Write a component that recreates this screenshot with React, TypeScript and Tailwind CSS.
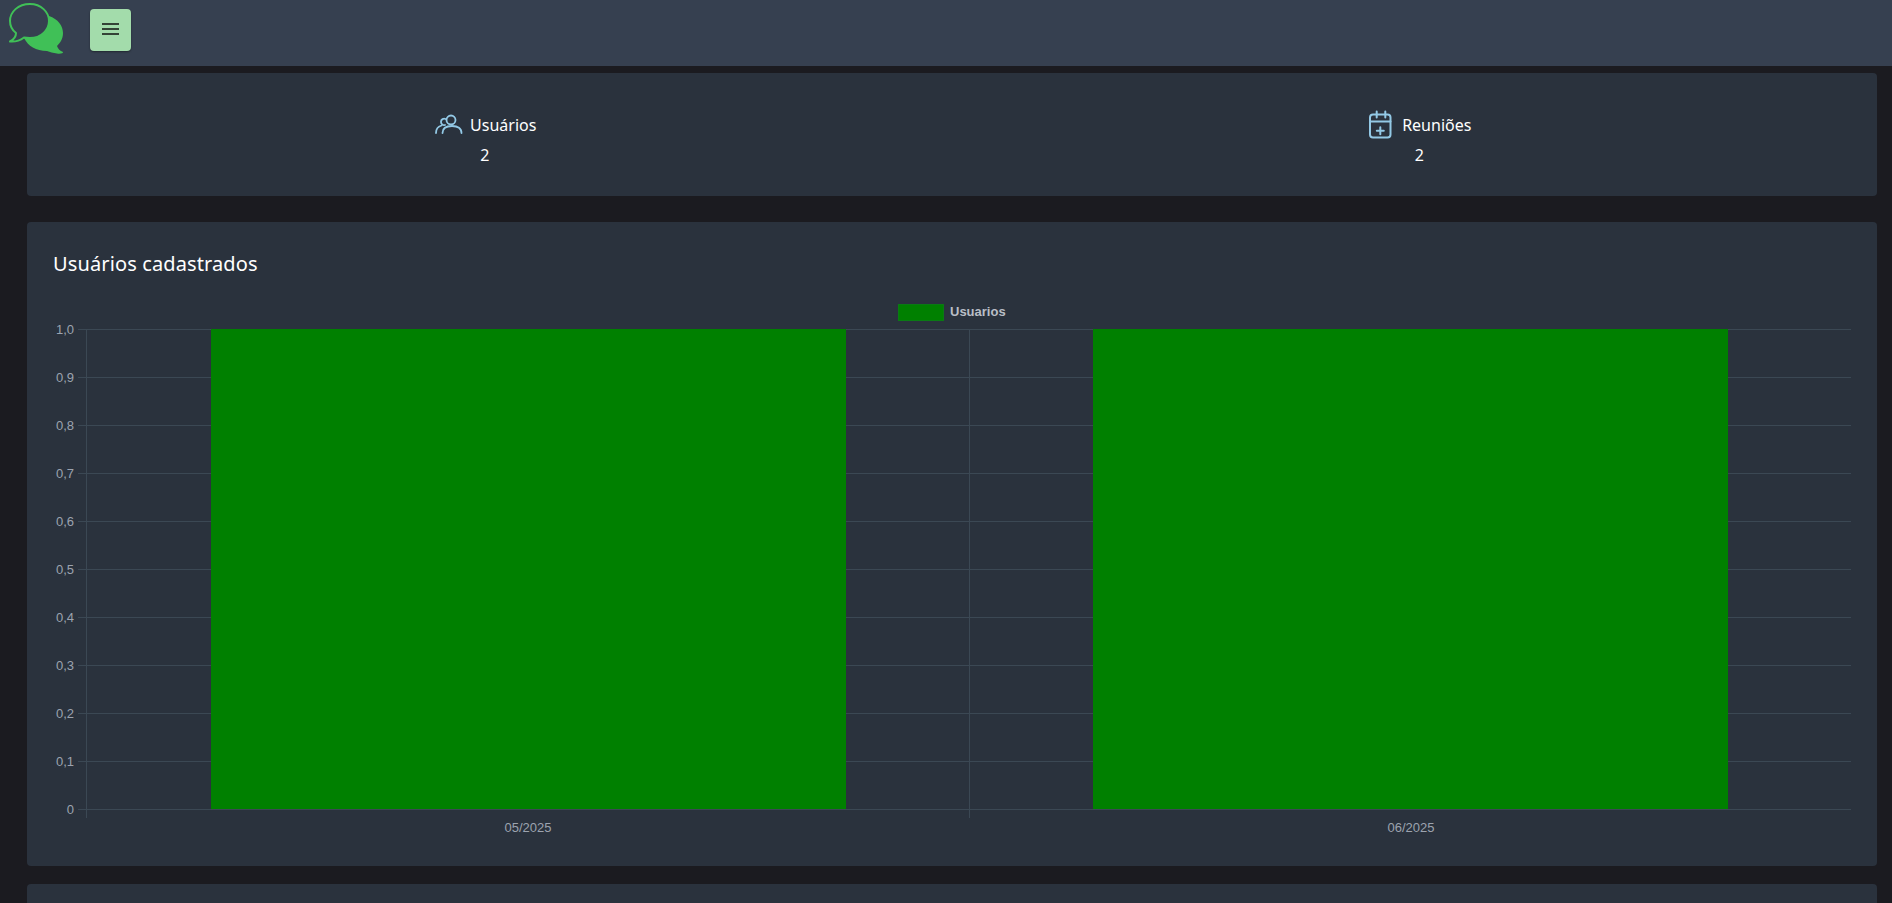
import type { ReactNode } from "react";

const yTicks = ["1,0", "0,9", "0,8", "0,7", "0,6", "0,5", "0,4", "0,3", "0,2", "0,1", "0"];
const gridColor = "#3b4854";

function Logo() {
  return (
    <svg width="66" height="56" viewBox="0 0 66 56" className="shrink-0">
      <path
        d="M49 16C58 19 63 26 63 33C63 39 60 43 57 46C58 49 60 51 63 52C63.5 53.5 60 54 57 53.5C53 53 50 52 47 51C36 51 28 46 24 38Z"
        fill="#40c057"
      />
      <path
        d="M30 4C18 4 10 12 10 21C10 26 12 30 16 33C16 37 13 40 10 41.5C15 42 20 40.5 24 37.5C26 38 28 38 30 38C41 38 49 30 49 21C49 12 41 4 30 4Z"
        fill="#364050"
        stroke="#40c057"
        strokeWidth="2"
        strokeLinejoin="round"
      />
    </svg>
  );
}

function UsersIcon() {
  return (
    <svg width="32" height="30" viewBox="0 0 32 30" fill="none" stroke="#93c9e6" strokeWidth="1.8" strokeLinecap="round">
      <circle cx="18" cy="10" r="4.5" />
      <path d="M9.5 23C9.5 18 13 16 19 16C25 16 28.5 18 28.5 23" />
      <path d="M12.5 9A3.2 3.2 0 1 0 12 15" />
      <path d="M3 23C3 19 5 16.5 8.5 15.5" />
    </svg>
  );
}

function CalendarIcon() {
  return (
    <svg width="28" height="30" viewBox="0 0 28 30" fill="none" stroke="#93c9e6" strokeWidth="2" strokeLinecap="round">
      <rect x="3" y="4.5" width="20.5" height="23" rx="3" />
      <path d="M9.7 1.5V7.5M18.3 1.5V7.5M3 11.5H23.5M13.3 17.2V24.2M9.8 20.7H16.8" />
    </svg>
  );
}

function Stat({ icon, label, value, gap }: { icon: ReactNode; label: string; value: string; gap: string }) {
  return (
    <div className="flex flex-col items-center pt-[8px]">
      <div className={`flex h-[30px] items-center ${gap}`}>
        {icon}
        <span className="text-[16px] text-white">{label}</span>
      </div>
      <span className="mt-[3px] text-[16px] leading-[24px] text-white">{value}</span>
    </div>
  );
}

function BarChart() {
  const left = 33;
  const right = 1798;
  const top = 29;
  const rowH = 48;
  const bottom = top + rowH * 10;
  return (
    <svg width="1798" height="545" className="block" fontFamily="'Liberation Sans', Arial, sans-serif">
      <g shapeRendering="crispEdges">
        {yTicks.map((t, i) => (
          <line key={t} x1={left - 8} x2={right} y1={top + i * rowH + 0.5} y2={top + i * rowH + 0.5} stroke={gridColor} />
        ))}
        <line x1={left + 0.5} x2={left + 0.5} y1={top} y2={bottom + 9} stroke={gridColor} />
        <line x1={916.5} x2={916.5} y1={top} y2={bottom + 9} stroke={gridColor} />
        <rect x={158} y={top} width={635} height={rowH * 10} fill="#008000" />
        <rect x={1040} y={top} width={635} height={rowH * 10} fill="#008000" />
        <rect x={845} y={4} width={45} height={16} fill="#008000" stroke="#0a7a14" />
      </g>
      <text x={897} y={15.5} fontSize="13" fontWeight="700" fill="#b9bec6">
        Usuarios
      </text>
      {yTicks.map((t, i) => (
        <text key={t} x={21} y={top + i * rowH + 4.5} fontSize="13" textAnchor="end" fill="#9ca3af">
          {t}
        </text>
      ))}
      <text x={475} y={532} fontSize="13" textAnchor="middle" fill="#9ca3af">
        05/2025
      </text>
      <text x={1358} y={532} fontSize="13" textAnchor="middle" fill="#9ca3af">
        06/2025
      </text>
    </svg>
  );
}

export default function App() {
  return (
    <div className="h-screen overflow-hidden bg-[#1b1b20] font-['Noto_Sans',sans-serif]">
      <header className="flex h-[66px] items-start bg-[#364050]">
        <Logo />
        <button className="ml-[24px] mt-[9px] flex h-[42px] w-[41px] items-center justify-center rounded-[4px] bg-[#a3dcab] shadow-[0_1px_2px_rgba(0,0,0,0.4)]">
          <svg width="17" height="14" viewBox="0 0 17 14" className="-mt-[2px]" stroke="#111" strokeWidth="1.5">
            <path d="M0 2H17M0 7H17M0 12H17" />
          </svg>
        </button>
      </header>

      <main className="flex flex-col pl-[27px] pr-[15px] pt-[7px]">
        <section className="grid h-[123px] grid-cols-2 items-center gap-x-[19px] rounded-[4px] bg-[#2a323d]">
          <Stat icon={<UsersIcon />} label="Usuários" value="2" gap="gap-[5px]" />
          <Stat icon={<CalendarIcon />} label="Reuniões" value="2" gap="gap-[7px]" />
        </section>

        <section className="mt-[26px] h-[644px] rounded-[4px] bg-[#2a323d] pl-[26px] pr-[25px]">
          <h2 className="pt-[28px] text-[20px] leading-[28px] tracking-[0.12px] text-white">Usuários cadastrados</h2>
          <div className="mt-[22px]">
            <BarChart />
          </div>
        </section>

        <section className="mt-[18px] h-[300px] rounded-[4px] bg-[#2a323d]" />
      </main>
    </div>
  );
}
